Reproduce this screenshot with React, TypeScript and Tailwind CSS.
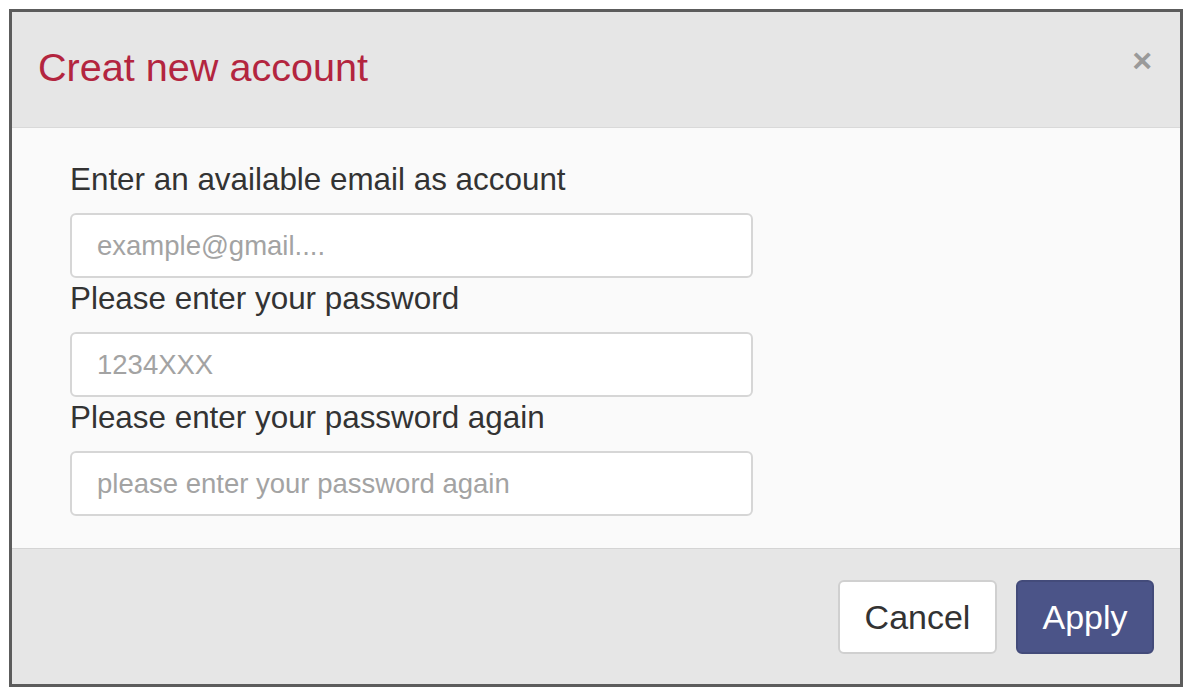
const font = { fontFamily: '"Liberation Sans", Arial, sans-serif' };

function Field({ label, placeholder }: { label: string; placeholder: string }) {
  return (
    <div className="flex flex-col">
      <label className="text-[31.4px] leading-[34px] text-[#333] mb-[16px]">{label}</label>
      <input
        placeholder={placeholder}
        className="w-[683px] h-[65px] rounded-[6px] border-2 border-[#d6d6d6] bg-white pl-[25px] text-[27.5px] text-[#555] placeholder:text-[#a3a3a3] outline-none mb-[4px]"
      />
    </div>
  );
}

export default function App() {
  return (
    <div className="bg-white w-[1190px] h-[687px] pl-[9px] pt-[9px]" style={font}>
      <div className="w-[1174px] h-[678px] border-[3px] border-[#5c5c5c] flex flex-col">
        <header className="h-[116px] bg-[#e6e6e6] border-b border-[#d9d9d9] flex items-center justify-between pl-[26px] pr-[28px]">
          <h1 className="text-[39.6px] leading-none text-[#b3253f] -mt-[4px]">Creat new account</h1>
          <span className="text-[34px] font-bold text-[#9a9a9a] leading-none -mt-[20px]">×</span>
        </header>
        <main className="h-[420px] bg-[#fafafa] pl-[58px] pt-[35px]">
          <Field label="Enter an available email as account" placeholder="example@gmail...." />
          <Field label="Please enter your password" placeholder="1234XXX" />
          <Field label="Please enter your password again" placeholder="please enter your password again" />
        </main>
        <footer className="flex-1 bg-[#e6e6e6] border-t border-[#d4d4d4] flex justify-end items-start pt-[31px] pr-[26px] gap-[19px]">
          <button className="w-[159px] h-[74px] rounded-[6px] bg-white border-2 border-[#d0d0d0] text-[34px] text-[#333]">
            Cancel
          </button>
          <button className="w-[138px] h-[74px] rounded-[6px] bg-[#4b5488] border-2 border-[#434b7a] text-[34px] text-white">
            Apply
          </button>
        </footer>
      </div>
    </div>
  );
}
